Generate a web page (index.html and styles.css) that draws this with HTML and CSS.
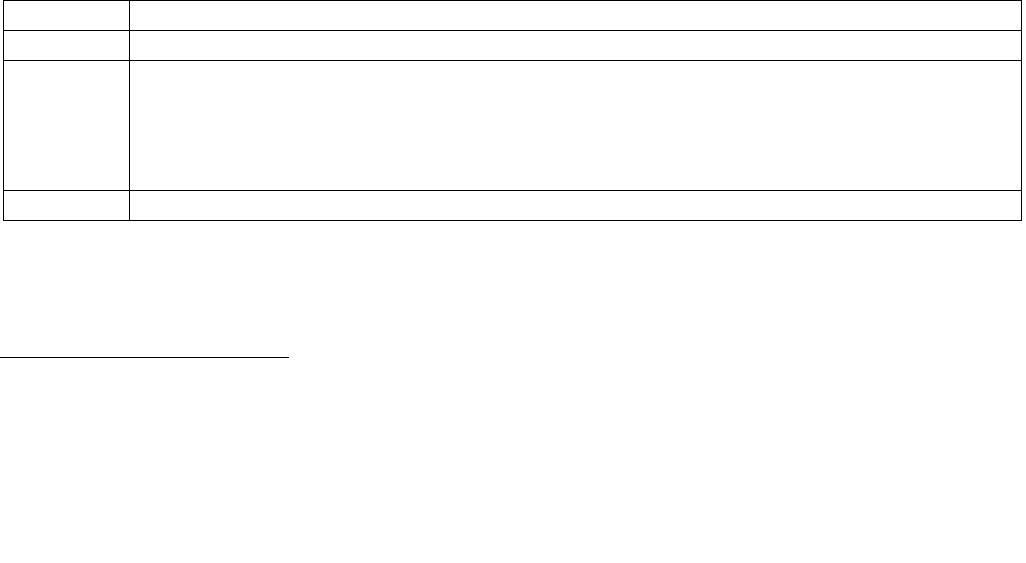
FILE: index.html
```html
<!DOCTYPE html>
<html>
<head>
<meta charset="utf-8">
<link rel="stylesheet" href="styles.css">
</head>
<body>
<div class="page">
  <table class="grid">
    <colgroup><col class="c1"><col class="c2"></colgroup>
    <tr class="r-short"><td></td><td></td></tr>
    <tr class="r-short"><td></td><td></td></tr>
    <tr class="r-tall"><td></td><td></td></tr>
    <tr class="r-short"><td></td><td></td></tr>
  </table>
  <div class="rule"></div>
</div>
</body>
</html>
```
FILE: styles.css
```css
html, body {
  margin: 0;
  padding: 0;
  background: #fff;
  font-family: "Liberation Serif", serif;
}
.page {
  display: flex;
  flex-direction: column;
  align-items: flex-start;
}
.grid {
  border-collapse: collapse;
  margin-left: 3px;
  width: 1019px;
  table-layout: fixed;
}
.grid td {
  border: 1px solid #000;
  padding: 0;
}
.c1 { width: 126px; }
.r-short { height: 30px; }
.r-tall { height: 130px; }
.rule {
  margin-top: 136px;
  width: 289px;
  border-top: 1px solid #000;
}
```
